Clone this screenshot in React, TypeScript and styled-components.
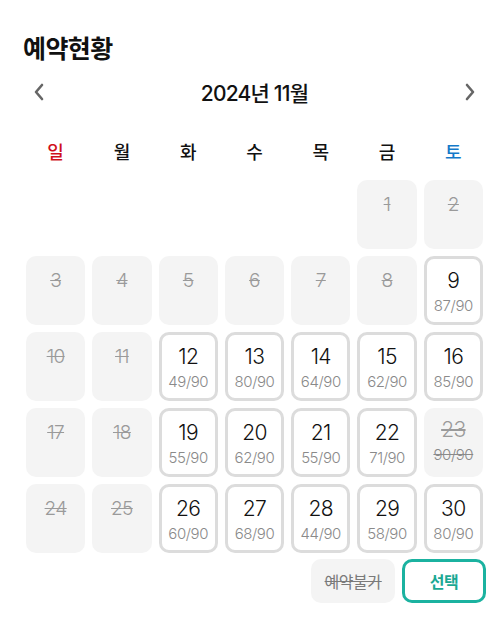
import { FunctionComponent } from "react";
import styled, { createGlobalStyle } from "styled-components";

const GlobalStyle = createGlobalStyle`
  body {
    margin: 0;
    background: #fff;
    font-family: Inter, "Noto Sans CJK KR", sans-serif;
  }
`;

const Page = styled.div`
  width: 500px;
  padding: 31px 17px 0 23px;
  box-sizing: border-box;
`;

const Title = styled.h1`
  margin: 0;
  font-family: "Noto Sans CJK KR", sans-serif;
  font-size: 25px;
  line-height: 32px;
  font-weight: 700;
  color: #111;
  letter-spacing: -0.6px;
`;

const MonthBar = styled.div`
  display: flex;
  justify-content: space-between;
  align-items: center;
  height: 30px;
  margin: 14px 0 0 10px;
  padding-right: 7px;
`;

const MonthText = styled.span`
  font-family: Inter, "Noto Sans CJK KR", sans-serif;
  font-size: 21px;
  font-weight: 500;
  color: #111;
  letter-spacing: -0.8px;
`;

const ArrowButton = styled.button`
  border: none;
  background: none;
  padding: 0;
  width: 12px;
  height: 20px;
  display: flex;
  align-items: center;
  justify-content: center;
`;

const Calendar = styled.div`
  margin: 0 0 0 3px;
`;

const WeekRow = styled.div`
  display: grid;
  grid-template-columns: repeat(7, 1fr);
  gap: 7px;
  height: 30px;
  align-items: center;
  margin: 29px 0 14px;
`;

const WeekDay = styled.span<{ color?: string }>`
  text-align: center;
  font-family: "Noto Sans CJK KR", sans-serif;
  font-size: 18px;
  font-weight: 500;
  color: ${({ color }) => color || "#111"};
`;

const Grid = styled.div`
  display: grid;
  grid-template-columns: repeat(7, 1fr);
  grid-auto-rows: 69px;
  gap: 7px;
`;

const Cell = styled.div<{ $open?: boolean }>`
  box-sizing: border-box;
  border-radius: 10px;
  display: flex;
  flex-direction: column;
  align-items: center;
  background: ${({ $open }) => ($open ? "#fff" : "#f4f4f4")};
  border: ${({ $open }) => ($open ? "3px solid #dcdcdc" : "none")};
  padding-top: ${({ $open }) => ($open ? "9px" : "12px")};
`;

const Day = styled.span<{ $open?: boolean }>`
  font-size: ${({ $open }) => ($open ? "21px" : "19px")};
  line-height: 26px;
  font-weight: 300;
  color: ${({ $open }) => ($open ? "#111" : "#9a9a9a")};
  text-decoration: ${({ $open }) => ($open ? "none" : "line-through")};
  letter-spacing: -0.6px;
`;

const Count = styled.span<{ $struck?: boolean }>`
  margin-top: 2px;
  font-size: 15px;
  line-height: 19px;
  font-weight: 300;
  color: #8a8a8a;
  letter-spacing: -0.4px;
  text-decoration: ${({ $struck }) => ($struck ? "line-through" : "none")};
`;

const Footer = styled.div`
  display: flex;
  justify-content: flex-end;
  gap: 7px;
  margin: 6px -3px 0 0;
`;

const LegendButton = styled.button<{ $select?: boolean }>`
  width: 84px;
  height: 44px;
  box-sizing: border-box;
  border-radius: 10px;
  font-family: "Noto Sans CJK KR", sans-serif;
  font-size: 16px;
  background: ${({ $select }) => ($select ? "#fff" : "#f4f4f4")};
  border: ${({ $select }) => ($select ? "3px solid #1bb2a0" : "none")};
  color: ${({ $select }) => ($select ? "#1aa893" : "#7a7a7a")};
  font-weight: ${({ $select }) => ($select ? 700 : 400)};
  text-decoration: ${({ $select }) => ($select ? "none" : "line-through")};
  letter-spacing: -0.5px;
`;

type DayData = { day: number; count?: string; full?: boolean };

const days: (DayData | null)[] = [
  null, null, null, null, null,
  { day: 1 }, { day: 2 },
  { day: 3 }, { day: 4 }, { day: 5 }, { day: 6 }, { day: 7 }, { day: 8 },
  { day: 9, count: "87/90" },
  { day: 10 }, { day: 11 },
  { day: 12, count: "49/90" }, { day: 13, count: "80/90" },
  { day: 14, count: "64/90" }, { day: 15, count: "62/90" },
  { day: 16, count: "85/90" },
  { day: 17 }, { day: 18 },
  { day: 19, count: "55/90" }, { day: 20, count: "62/90" },
  { day: 21, count: "55/90" }, { day: 22, count: "71/90" },
  { day: 23, count: "90/90", full: true },
  { day: 24 }, { day: 25 },
  { day: 26, count: "60/90" }, { day: 27, count: "68/90" },
  { day: 28, count: "44/90" }, { day: 29, count: "58/90" },
  { day: 30, count: "80/90" },
];

const weekDays = [
  { label: "일", color: "#d0101b" },
  { label: "월" },
  { label: "화" },
  { label: "수" },
  { label: "목" },
  { label: "금" },
  { label: "토", color: "#1479c9" },
];

const Chevron: FunctionComponent<{ flip?: boolean }> = ({ flip }) => (
  <svg width="12" height="20" viewBox="0 0 12 20">
    <path
      d={flip ? "M3 3 L9 10 L3 17" : "M9 3 L3 10 L9 17"}
      fill="none"
      stroke="#666"
      strokeWidth="2.6"
      strokeLinecap="round"
      strokeLinejoin="round"
    />
  </svg>
);

const App: FunctionComponent = () => {
  return (
    <Page>
      <GlobalStyle />
      <Title>예약현황</Title>
      <MonthBar>
        <ArrowButton>
          <Chevron />
        </ArrowButton>
        <MonthText>2024년 11월</MonthText>
        <ArrowButton>
          <Chevron flip />
        </ArrowButton>
      </MonthBar>
      <Calendar>
        <WeekRow>
          {weekDays.map((w) => (
            <WeekDay key={w.label} color={w.color}>
              {w.label}
            </WeekDay>
          ))}
        </WeekRow>
        <Grid>
          {days.map((d, i) => {
            if (!d) return <div key={i} />;
            if (d.full) {
              return (
                <Cell key={i} $open={false} style={{ paddingTop: 9 }}>
                  <Day $open={false} style={{ fontSize: 21 }}>
                    {d.day}
                  </Day>
                  <Count $struck>{d.count}</Count>
                </Cell>
              );
            }
            const open = !!d.count;
            return (
              <Cell key={i} $open={open}>
                <Day $open={open}>{d.day}</Day>
                {open && <Count>{d.count}</Count>}
              </Cell>
            );
          })}
        </Grid>
      </Calendar>
      <Footer>
        <LegendButton>예약불가</LegendButton>
        <LegendButton $select>선택</LegendButton>
      </Footer>
    </Page>
  );
};

export default App;
